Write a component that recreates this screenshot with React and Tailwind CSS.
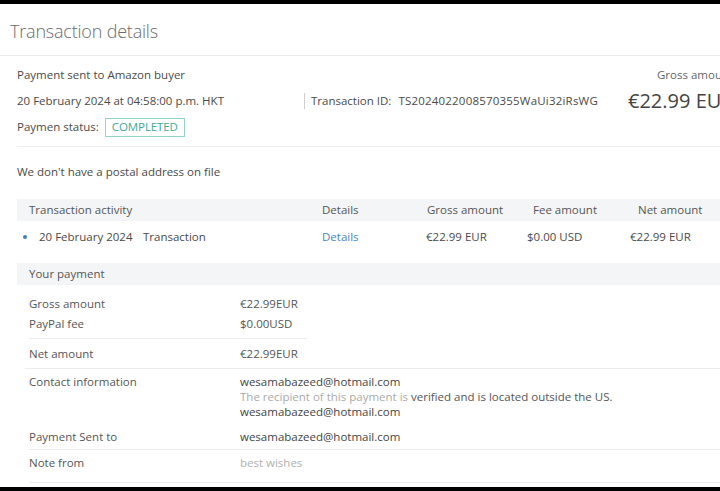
import React from "react";

function Row({ label, children, className = "" }) {
  return (
    <div className={"flex " + className}>
      <div className="w-[211px] shrink-0">{label}</div>
      <div>{children}</div>
    </div>
  );
}

export default function App() {
  return (
    <div className="w-[720px] h-[491px] overflow-hidden bg-white relative font-['Open_Sans',sans-serif] text-[11.5px] text-[#4a4a4a]">
      <div className="h-[4px] bg-black" />
      <div className="h-[52px] pt-[3px] border-b border-[#ececec] flex items-center pl-[10px] text-[18px] font-light text-[#6b6b6b] tracking-[-0.2px]">
        Transaction details
      </div>
      <div className="w-[800px] pl-[17px]">
        {/* summary */}
        <div className="flex w-[730px] pt-[6px] pb-[6px] border-b border-[#eeeeee]">
          <div className="w-[287px] shrink-0">
            <div className="h-[26px] flex items-center">Payment sent to Amazon buyer</div>
            <div className="h-[26px] flex items-center">20 February 2024 at 04:58:00 p.m. HKT</div>
            <div className="h-[26px] flex items-center">
              <span>Paymen status:</span>
              <span className="ml-[6px] h-[19px] px-[6px] flex items-center border border-[#8fd3c9] text-[#3fa89a] tracking-[-0.1px]">COMPLETED</span>
            </div>
          </div>
          <div className="w-[324px] shrink-0">
            <div className="h-[26px]" />
            <div className="h-[26px] flex items-center">
              <span className="w-px h-[16px] bg-[#cfcfcf] mr-[6px]" />
              <span>Transaction ID:</span>
              <span className="ml-[7px] tracking-[0.2px]">TS2024022008570355WaUi32iRsWG</span>
            </div>
          </div>
          <div className="flex flex-col">
            <div className="h-[26px] flex items-center pl-[29px] text-[#666] whitespace-nowrap">Gross amount</div>
            <div className="h-[26px] flex items-center text-[20px] text-[#444] whitespace-nowrap">€22.99 EUR</div>
          </div>
        </div>

        <div className="h-[49px] flex items-center">We don't have a postal address on file</div>

        {/* activity table */}
        <div className="mt-[3px] h-[22px] bg-[#f4f5f7] flex items-center pl-[12px] text-[#555]">
          <div className="w-[293px] shrink-0">Transaction activity</div>
          <div className="w-[105px] shrink-0">Details</div>
          <div className="w-[106px] shrink-0">Gross amount</div>
          <div className="w-[105px] shrink-0">Fee amount</div>
          <div>Net amount</div>
        </div>
        <div className="h-[32px] flex items-center pl-[6px]">
          <span className="w-[4px] h-[4px] rounded-full bg-[#3d7fbf] mr-[12px]" />
          <div className="w-[104px] shrink-0">20 February 2024</div>
          <div className="w-[179px] shrink-0">Transaction</div>
          <div className="w-[104px] shrink-0 text-[#4a86c2]">Details</div>
          <div className="w-[101px] shrink-0">€22.99 EUR</div>
          <div className="w-[103px] shrink-0">$0.00 USD</div>
          <div>€22.99 EUR</div>
        </div>

        {/* your payment */}
        <div className="mt-[10px] h-[22px] bg-[#f4f5f7] flex items-center pl-[12px] text-[#555]">
          Your payment
        </div>
        <div className="pl-[12px] text-[#555]">
          <div className="pt-[9px] pb-[4px] w-[278px] border-b border-[#ececec]">
            <Row label="Gross amount" className="h-[20px] items-center">€22.99EUR</Row>
            <Row label="PayPal fee" className="h-[20px] items-center">$0.00USD</Row>
          </div>
        </div>
        <div className="ml-[8px] pl-[4px] border-b border-[#ececec] text-[#555]">
          <Row label="Net amount" className="h-[29px] items-center">€22.99EUR</Row>
        </div>
        <div className="pl-[12px] text-[#555]">
          <div className="pt-[5px] pb-[6px] flex">
            <div className="w-[211px] shrink-0 leading-[15px]">Contact information</div>
            <div className="leading-[15px]">
              <div className="text-[#444]">wesamabazeed@hotmail.com</div>
              <div>
                <span className="text-[#aaa]">The recipient of this payment is </span>
                <span className="text-[#555]">verified and is located outside the US.</span>
              </div>
              <div className="text-[#444]">wesamabazeed@hotmail.com</div>
            </div>
          </div>
          <div className="border-b border-[#ececec]">
            <Row label="Payment Sent to" className="h-[24px] items-center">
              <span className="text-[#444]">wesamabazeed@hotmail.com</span>
            </Row>
          </div>
          <div className="border-b border-[#ececec] pb-[6px]">
            <Row label="Note from" className="h-[26px] items-center">
              <span className="text-[#b0b0b0]">best wishes</span>
            </Row>
          </div>
        </div>
      </div>
      <div className="absolute left-0 right-0 bottom-0 h-[4px] bg-black" />
    </div>
  );
}
